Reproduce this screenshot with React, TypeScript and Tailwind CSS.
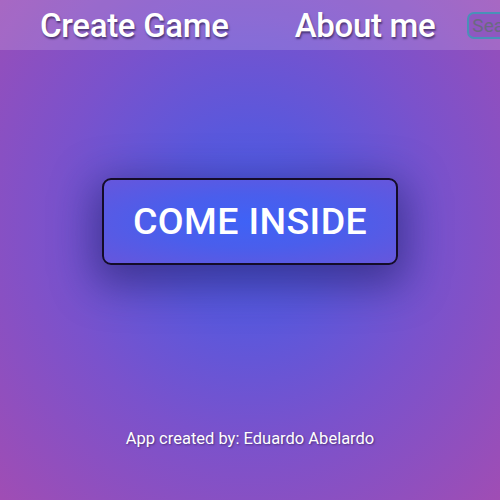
import React from "react";

export default function App() {
  return (
    <div
      className="relative flex h-[500px] w-[500px] flex-col overflow-hidden bg-[radial-gradient(ellipse_farthest-corner_at_50%_45%,#4a5ee8_0%,#5a58dc_25%,#7a52cc_55%,#a04db4_100%)]"
      style={{ fontFamily: "Roboto, 'Noto Sans', sans-serif" }}
    >
      <nav className="flex h-[50px] shrink-0 items-center bg-white/15">
        <span className="ml-[40px] shrink-0 whitespace-nowrap text-[33px] font-medium leading-none tracking-[-0.3px] text-white [text-shadow:1px_2px_2px_rgba(30,20,60,0.6)]">
          Create Game
        </span>
        <span className="ml-[66px] shrink-0 whitespace-nowrap text-[33px] font-medium leading-none tracking-[-0.3px] text-white [text-shadow:1px_2px_2px_rgba(30,20,60,0.6)]">
          About me
        </span>
        <div className="ml-[32px] flex h-[27px] w-[80px] shrink-0 items-center rounded-[7px] border-2 border-[#4a90b8] bg-[#8f58c0] px-[3px]">
          <span className="whitespace-nowrap text-[19px] leading-none text-[#6a6a80]">Search</span>
        </div>
      </nav>
      <div className="flex justify-center pt-[128px]">
        <button className="flex h-[87px] w-[296px] items-center justify-center rounded-[9px] border-2 border-[#140c28] bg-[radial-gradient(ellipse_at_center,#3f62f6_0%,#4a5eec_45%,#6656dc_100%)] shadow-[0_12px_40px_8px_rgba(35,25,95,0.55)]">
          <span className="whitespace-nowrap text-[37.5px] font-medium leading-none tracking-[0.4px] text-white">COME INSIDE</span>
        </button>
      </div>
      <div className="mt-[166px] flex justify-center">
        <span className="whitespace-nowrap text-[16.5px] leading-none text-white [text-shadow:1px_1px_2px_rgba(30,20,60,0.5)]">
          App created by: Eduardo Abelardo
        </span>
      </div>
    </div>
  );
}
